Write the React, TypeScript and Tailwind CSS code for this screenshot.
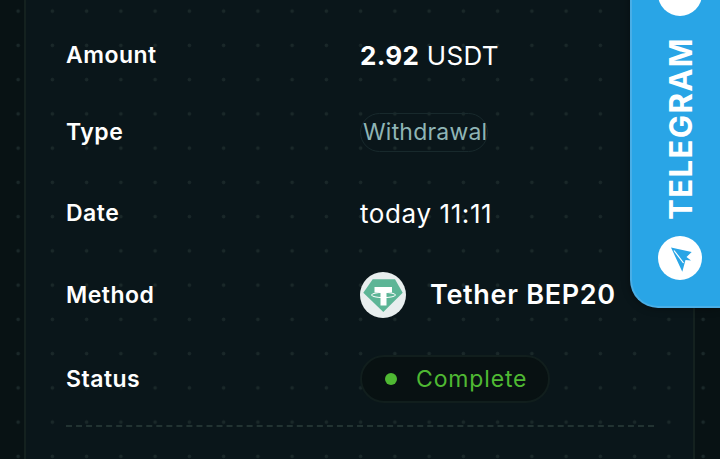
import React from 'react';

function TetherIcon() {
  return (
    <svg width="46" height="46" viewBox="0 0 46 46">
      <circle cx="23" cy="23" r="23" fill="#e8eeee" />
      <path d="M12.7 7.3H35L42.7 20.7L23.3 40L3.3 20.7Z" fill="#5cb596" />
      <path d="M14.5 15H32V20.5H26.5V33.5H20.5V20.5H14.5Z" fill="#ffffff" />
      <ellipse cx="23.5" cy="23" rx="12" ry="2.6" fill="none" stroke="#ffffff" strokeWidth="1" />
    </svg>
  );
}

function PlaneIcon() {
  return (
    <svg width="44" height="44" viewBox="0 0 44 44" className="shrink-0">
      <circle cx="22" cy="22" r="22" fill="#ffffff" />
      <path d="M13 11.5L33.7 16L28.5 21L33 24.5L27.5 24L24.3 35.7Z" fill="#29a5e6" />
      <path d="M16 14.5L25.5 27" stroke="#ffffff" strokeWidth="1.2" />
    </svg>
  );
}

function Row({ label, className, children }: { label: string; className: string; children: React.ReactNode }) {
  return (
    <div className={`flex items-center ${className}`}>
      <div className="w-[294px] shrink-0 text-[23px] font-semibold tracking-[0.5px] text-white">{label}</div>
      <div className="flex items-center">{children}</div>
    </div>
  );
}

export default function App() {
  return (
    <div className="relative h-[459px] w-[720px] overflow-hidden bg-[#081214] font-['Inter',sans-serif]">
      <div className="ml-6 h-full w-[671px] border-x-2 border-[#14211f] bg-[#0a161a]" />
      {/* dot grid sits over both the page and the card */}
      <div className="pointer-events-none absolute inset-0 bg-[radial-gradient(circle,#1a2829_1.7px,transparent_2.1px)] bg-[size:34.25px_34.25px] bg-[position:1px_-6px]" />

      <div className="absolute inset-0 flex flex-col px-[66px] pt-[15px]">
        <Row label="Amount" className="h-[80px]">
          <span className="text-[26px] tracking-[0.3px] text-white"><b className="font-bold">2.92</b> USDT</span>
        </Row>
        <Row label="Type" className="h-[75px]">
          <span className="flex h-[39px] w-[128px] items-center whitespace-nowrap rounded-full border border-[#18292c] pl-[2px] text-[23px] tracking-[0.2px] text-[#8fb5b5]">Withdrawal</span>
        </Row>
        <Row label="Date" className="h-[86px]">
          <span className="text-[26px] tracking-[0.6px] text-white">today 11:11</span>
        </Row>
        <Row label="Method" className="h-[78px]">
          <div className="flex items-center gap-6">
            <TetherIcon />
            <span className="text-[27px] font-semibold tracking-[0.7px] text-white">Tether BEP20</span>
          </div>
        </Row>
        <Row label="Status" className="h-[90px]">
          <span className="flex h-[48px] w-[190px] items-center gap-[19px] rounded-full border-2 border-[#111e1d] bg-[#081112] pl-[23px] text-[23px] tracking-[0.85px] text-[#4fb933]">
            <span className="h-3 w-3 rounded-full bg-[#4fb933]" />
            Complete
          </span>
        </Row>
        <div className="mt-[1px] w-[588px] border-t-2 border-dashed border-[#223332]" />
      </div>

      <div className="absolute right-0 top-[-28px] flex h-[336px] w-[90px] flex-col items-center gap-[16px] rounded-bl-[28px] border-b-2 border-l-2 border-[#4aaee6] bg-[#29a5e6] pl-[8px] shadow-[0_0_8px_rgba(0,0,0,0.4)]">
        <div className="h-11 w-11 shrink-0 rounded-full bg-white" />
        <div className="mt-[5px] rotate-180 text-[31px] font-bold leading-none tracking-[1.4px] text-white [writing-mode:vertical-rl]">TELEGRAM</div>
        <PlaneIcon />
      </div>
    </div>
  );
}
